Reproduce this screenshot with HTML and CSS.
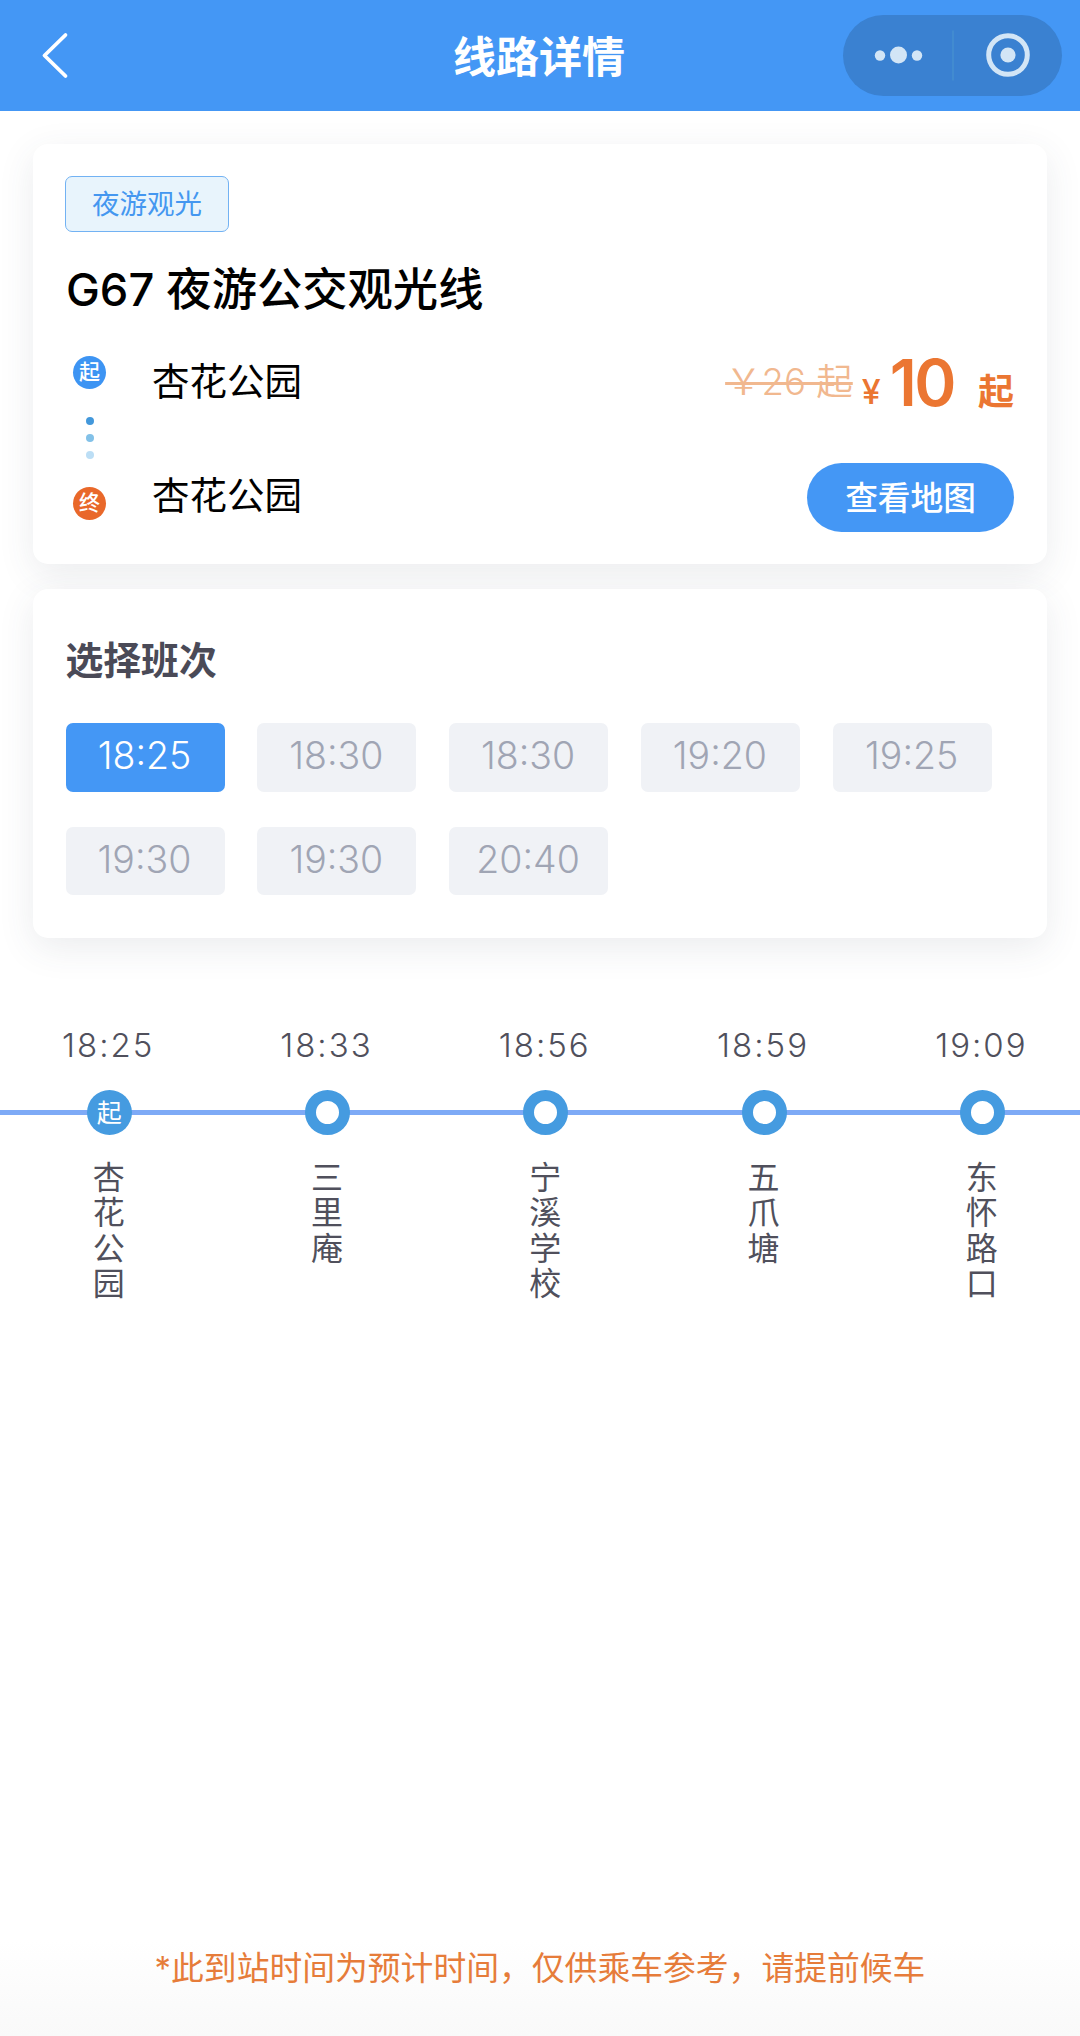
FILE: index.html
```html
<!DOCTYPE html>
<html lang="zh-CN">
<head>
<meta charset="utf-8">
<title>线路详情</title>
<link rel="stylesheet" href="styles.css">
</head>
<body>
<div class="page">
  <header class="navbar">
    <svg class="back" width="30" height="48" viewBox="0 0 30 48"><path d="M24.500 3 3.500 23.500 24.500 44" fill="none" stroke="#fff" stroke-width="3.800" stroke-linecap="round" stroke-linejoin="round"/></svg>
    <h1 class="nav-title">线路详情</h1>
    <div class="capsule">
      <svg width="219" height="81" viewBox="0 0 219 81">
        <g fill="#d2e5f6">
          <circle cx="37" cy="40.500" r="5.200"/><circle cx="55.500" cy="40" r="8.500"/><circle cx="74" cy="40.500" r="5.200"/>
          <circle cx="165" cy="40" r="7.600"/>
        </g>
        <path d="M110 15.500V65.500" stroke="#428bd0" stroke-width="2"/>
        <circle cx="165" cy="40" r="19.300" fill="none" stroke="#d2e5f6" stroke-width="5"/>
      </svg>
    </div>
  </header>

  <main class="content">
    <section class="card route">
      <span class="tag">夜游观光</span>
      <h2 class="route-name">G67 夜游公交观光线</h2>
      <div class="route-body">
        <div class="marks">
          <span class="mark mark-start">起</span>
          <span class="dots"><i class="dot"></i><i class="dot dot-mid"></i><i class="dot dot-light"></i></span>
          <span class="mark mark-end">终</span>
        </div>
        <div class="ends"><span>杏花公园</span><span>杏花公园</span></div>
        <div class="offer">
          <div class="price">
            <del class="old">￥26 起</del>
            <span class="yen">¥</span><span class="amount">10</span><span class="from">起</span>
          </div>
          <button class="map-btn">查看地图</button>
        </div>
      </div>
    </section>

    <section class="card shifts">
      <h3 class="shifts-title">选择班次</h3>
      <div class="slots">
        <span class="slot active">18:25</span>
        <span class="slot">18:30</span>
        <span class="slot">18:30</span>
        <span class="slot">19:20</span>
        <span class="slot">19:25</span>
        <span class="slot">19:30</span>
        <span class="slot">19:30</span>
        <span class="slot">20:40</span>
      </div>
    </section>
  </main>

  <ol class="timeline">
    <li class="stop"><time>18:25</time><span class="node node-first">起</span><span class="stop-name">杏花公园</span></li>
    <li class="stop"><time>18:33</time><span class="node"></span><span class="stop-name">三里庵</span></li>
    <li class="stop"><time>18:56</time><span class="node"></span><span class="stop-name">宁溪学校</span></li>
    <li class="stop"><time>18:59</time><span class="node"></span><span class="stop-name">五爪塘</span></li>
    <li class="stop"><time>19:09</time><span class="node"></span><span class="stop-name">东怀路口</span></li>
  </ol>

  <footer class="note">*此到站时间为预计时间，仅供乘车参考，请提前候车</footer>
</div>
</body>
</html>
```
FILE: styles.css
```css
* { box-sizing: border-box; margin: 0; padding: 0; }
body {
  background: #fff;
  color: #000;
  font-family: Inter, "Noto Sans CJK SC", sans-serif;
}
.page {
  width: 1080px;
  height: 2036px;
  display: flex;
  flex-direction: column;
  overflow: hidden;
  background: linear-gradient(#fff 1940px, #f9f9f9 2036px);
}

.navbar {
  height: 111px;
  flex: none;
  display: grid;
  grid-template-columns: 1fr auto 1fr;
  align-items: center;
  padding: 0 18px 0 41px;
  background: #4497f5;
  position: relative;
  z-index: 1;
}
.back { display: block; }
.nav-title {
  color: #fff;
  font-size: 43px;
  font-weight: 600;
  line-height: 60px;
  margin: 2px 0 0 -25px;
}
.capsule {
  justify-self: end;
  width: 219px;
  height: 81px;
  border-radius: 41px;
  background: #3a81d1;
}
.capsule svg { display: block; }

.content {
  flex: none;
  display: flex;
  flex-direction: column;
  gap: 25px;
  padding: 33px 33px 0;
}
.card {
  background: #fff;
  border-radius: 15px;
  box-shadow: 0 10px 36px rgba(60, 70, 90, 0.1);
}

.route { height: 420px; padding: 32px 33px 0 32px; }
.tag {
  display: block;
  width: 164px;
  height: 56px;
  border: 1px solid #72b2f3;
  border-radius: 7px;
  background: #e8f4fc;
  color: #4497f0;
  font-size: 27.500px;
  line-height: 54px;
  text-align: center;
}
.route-name {
  margin-top: 28px;
  padding-left: 1px;
  font-size: 45.300px;
  font-weight: 500;
  line-height: 60px;
  white-space: pre;
}
.route-body {
  display: flex;
  height: 212px;
}
.marks {
  width: 49px;
  padding-top: 36px;
  display: flex;
  flex-direction: column;
  align-items: center;
}
.mark {
  width: 33px;
  height: 33px;
  border-radius: 50%;
  color: #fff;
  font-size: 21px;
  font-weight: 500;
  line-height: 32px;
  text-align: center;
}
.mark-start { background: #3d94f3; }
.mark-end { background: #e9682a; }
.dots {
  height: 98px;
  display: flex;
  flex-direction: column;
  align-items: center;
  gap: 9px;
  padding-top: 28px;
}
.dot { width: 8px; height: 8px; border-radius: 50%; background: #4398db; }
.dot-mid { background: #82c1e8; }
.dot-light { background: #bcdef5; }
.ends {
  display: flex;
  flex-direction: column;
  gap: 64px;
  padding: 37px 0 0 38px;
  font-size: 37.500px;
  line-height: 50px;
}
.offer {
  flex: 1;
  display: flex;
  flex-direction: column;
  align-items: flex-end;
  justify-content: space-between;
  padding-top: 20px;
}
.price {
  display: flex;
  align-items: baseline;
  color: #eb7632;
  font-weight: 600;
  line-height: 86px;
}
.old {
  color: #f1b88f;
  font-size: 36.500px;
  font-weight: 350;
  text-decoration-thickness: 2.500px;
  position: relative;
  top: -11px;
  left: -2px;
}
.yen { margin-left: 7px; font-size: 34px; font-weight: 500; position: relative; top: -2px; }
.amount { margin-left: 9px; font-size: 64px; letter-spacing: -2.500px; }
.from { margin-left: 24px; font-size: 36px; font-weight: 600; position: relative; top: -1px; }
.map-btn {
  width: 207px;
  height: 69px;
  border: 0;
  border-radius: 35px;
  background: #4497f5;
  color: #fff;
  font: 500 32.700px/70px Inter, "Noto Sans CJK SC", sans-serif;
}

.shifts { height: 349px; padding: 43px 32.500px 0; }
.shifts-title {
  color: #4a4a57;
  font-size: 37.800px;
  font-weight: 600;
  line-height: 56px;
}
.slots {
  display: grid;
  grid-template-columns: repeat(5, 159px);
  gap: 35px 32.800px;
  margin-top: 35px;
}
.slot {
  height: 68.500px;
  padding-right: 1px;
  border-radius: 7px;
  background: #f0f2f6;
  color: #a0a5b4;
  font-size: 37.500px;
  font-weight: 350;
  line-height: 66px;
  text-align: center;
}
.slot.active { background: #4497f5; color: #fff; }

.timeline {
  flex: none;
  display: grid;
  grid-template-columns: repeat(5, 218.300px);
  padding-top: 81px;
  list-style: none;
  color: #50505c;
  background: linear-gradient(#7eaaf6, #7eaaf6) 0 172px / 100% 5px no-repeat;
}
.stop { display: flex; flex-direction: column; align-items: center; }
.stop time {
  margin-right: 2px;
  font-size: 33px;
  font-weight: 350;
  line-height: 52px;
  letter-spacing: 2px;
}
.node {
  width: 45px;
  height: 45px;
  margin-top: 18.500px;
  border: 11px solid #459be0;
  border-radius: 50%;
  background: #fff;
}
.node-first {
  border: 0;
  background: #459be0;
  color: #fff;
  font-size: 25px;
  line-height: 46px;
  text-align: center;
}
.stop-name {
  margin: 26px 7px 0 0;
  writing-mode: vertical-rl;
  font-size: 32px;
  line-height: 40px;
  letter-spacing: 3.300px;
}

.note {
  margin-top: auto;
  padding-bottom: 42px;
  color: #e67c3a;
  font-size: 32.800px;
  line-height: 52px;
  text-align: center;
}
```
